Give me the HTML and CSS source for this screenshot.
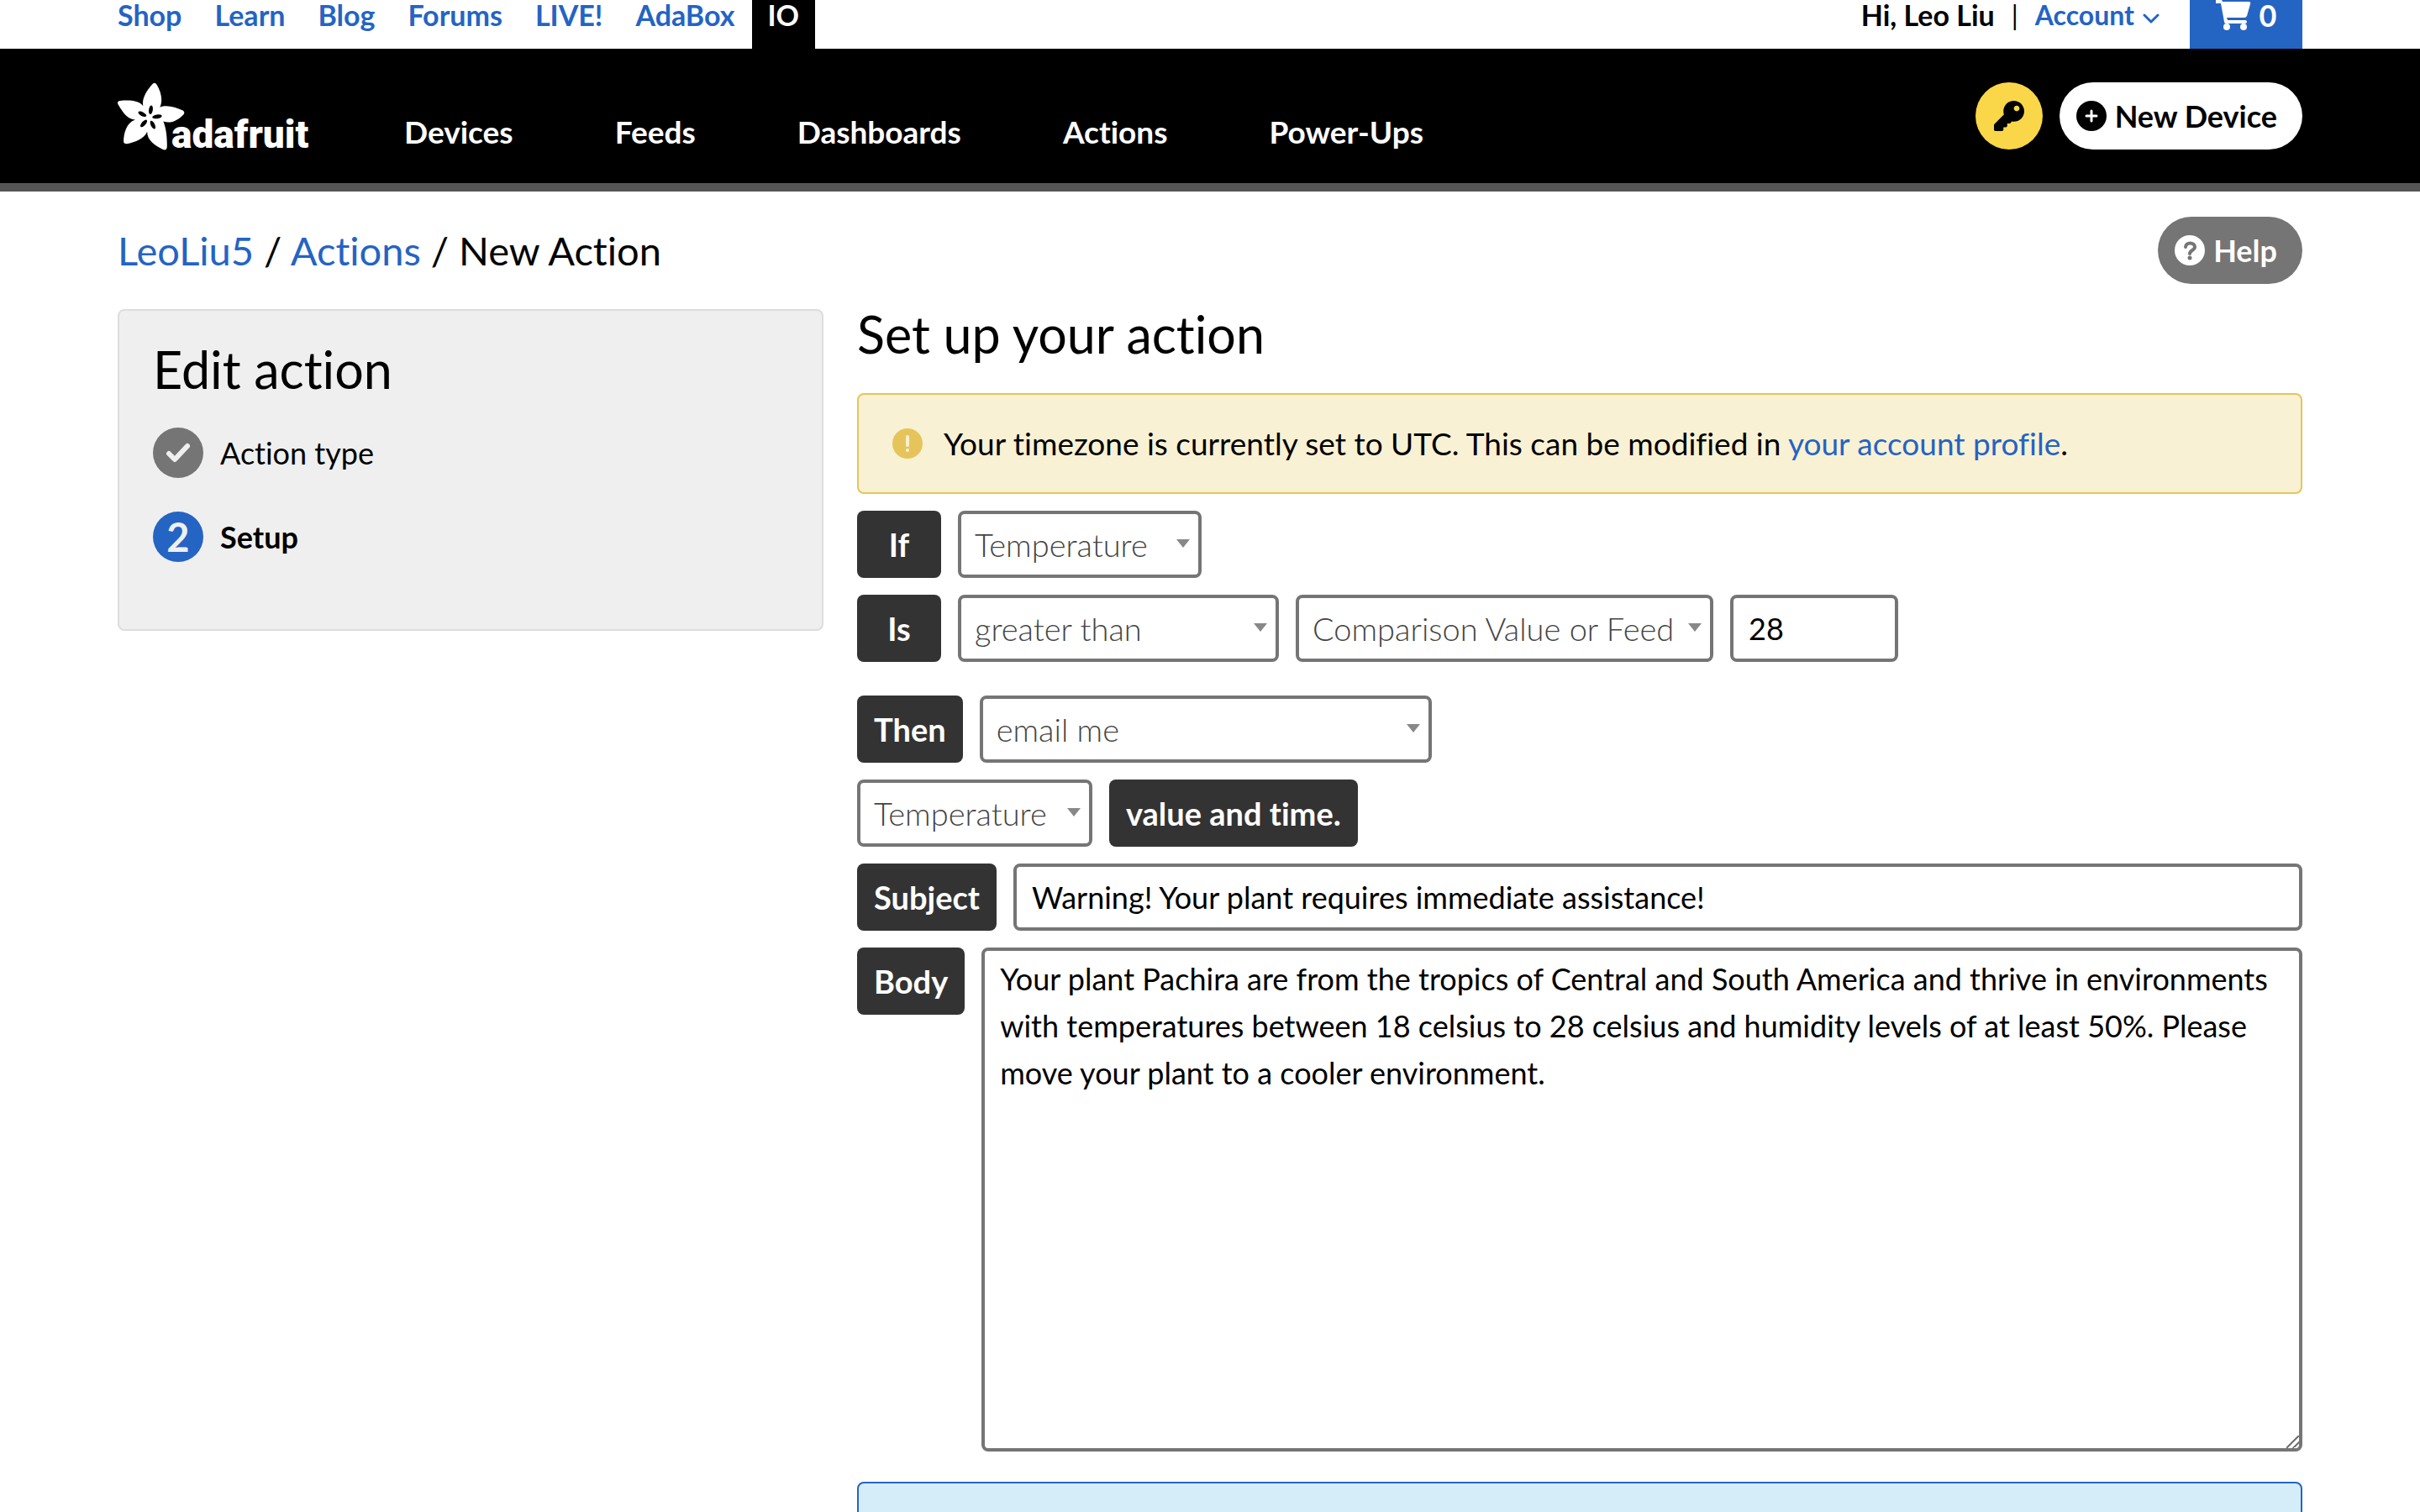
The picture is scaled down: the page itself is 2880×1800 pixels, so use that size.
FILE: index.html
```html
<!DOCTYPE html>
<html lang="en">
<head>
<meta charset="utf-8">
<title>New Action - Adafruit IO</title>
<meta name="viewport" content="width=device-width, initial-scale=1">
<link rel="stylesheet" href="styles.css">
</head>
<body>
<div class="topbar">
  <div class="container topbar-inner">
    <nav class="site-links" aria-label="Adafruit sites">
      <a href="#">Shop</a>
      <a href="#">Learn</a>
      <a href="#">Blog</a>
      <a href="#">Forums</a>
      <a href="#">LIVE!</a>
      <a href="#">AdaBox</a>
      <a href="#" class="current">IO</a>
    </nav>
    <div class="account">
      <span class="greeting">Hi, Leo Liu</span>
      <span class="divider">|</span>
      <a href="#" class="account-link">Account
        <svg class="chevron" viewBox="0 0 20 12" aria-hidden="true"><path d="M2 2l8 8 8-8" fill="none" stroke="currentColor" stroke-width="3" stroke-linecap="round" stroke-linejoin="round"/></svg>
      </a>
      <a href="#" class="cart" aria-label="Cart, 0 items">
        <svg class="cart-icon" viewBox="0 0 42 36" aria-hidden="true"><path d="M0 0H7L8 2H39Q42 2 41 5L37 19Q36 21 34 21H13L14 24H35Q37 24 37 26T35 28H12Q10 28 10 26L6 4H0Z" fill="currentColor"/><circle cx="13" cy="32" r="4" fill="currentColor"/><circle cx="33" cy="32" r="4" fill="currentColor"/></svg>
        <span>0</span>
      </a>
    </div>
  </div>
</div>

<header class="header">
  <div class="container header-inner">
    <a href="#" class="logo">
      <svg class="flower" viewBox="30 26 237 240" aria-hidden="true">
        <path fill="#fff" d="M151 34Q160 22 168 34C184 60 190 92 179 114C200 104 232 112 260 125Q269 131 262 140C244 158 220 174 191 164C202 190 205 225 204 256Q201 268 190 263C160 248 134 230 134 200C126 222 92 238 62 243Q50 243 51 233C52 205 60 170 92 158C66 156 52 138 31 103Q27 92 39 91C72 88 106 90 120 110C114 84 132 56 151 34Z"/>
        <g fill="#000">
          <ellipse cx="147" cy="123" rx="7" ry="16" transform="rotate(8 147 123)"/>
          <ellipse cx="117" cy="138" rx="16" ry="7" transform="rotate(28 117 138)"/>
          <ellipse cx="169" cy="147" rx="17" ry="7" transform="rotate(-8 169 147)"/>
          <ellipse cx="122" cy="171" rx="16" ry="7" transform="rotate(-48 122 171)"/>
          <ellipse cx="154" cy="176" rx="16" ry="7" transform="rotate(64 154 176)"/>
        </g>
      </svg>
      <span class="wordmark">adafruit</span>
    </a>
    <nav class="main-nav" aria-label="Main">
      <a href="#">Devices</a>
      <a href="#">Feeds</a>
      <a href="#">Dashboards</a>
      <a href="#">Actions</a>
      <a href="#">Power-Ups</a>
    </nav>
    <div class="header-actions">
      <button type="button" class="key-button" aria-label="Show key">
        <svg class="icon" viewBox="0 0 512 512" aria-hidden="true"><path fill="currentColor" d="M512 176.001C512 273.203 433.202 352 336 352c-11.22 0-22.19-1.062-32.827-3.069l-24.012 27.014A23.999 23.999 0 0 1 261.223 384H224v40c0 13.255-10.745 24-24 24h-40v40c0 13.255-10.745 24-24 24H24c-13.255 0-24-10.745-24-24v-78.059c0-6.365 2.529-12.47 7.029-16.971l161.802-161.802C163.108 213.814 160 195.271 160 176 160 78.798 238.797.001 335.999 0 433.488-.001 512 78.511 512 176.001zM336 128c0 26.51 21.49 48 48 48s48-21.49 48-48-21.49-48-48-48-48 21.49-48 48z"/></svg>
      </button>
      <button type="button" class="pill pill-light">
        <svg class="icon" viewBox="0 0 36 36" aria-hidden="true"><circle cx="18" cy="18" r="18" fill="currentColor"/><path d="M18 12v12M12 18h12" stroke="#fff" stroke-width="3" stroke-linecap="round"/></svg>
        <span>New Device</span>
      </button>
    </div>
  </div>
</header>

<main class="container">
  <div class="page-head">
    <nav class="breadcrumb" aria-label="Breadcrumb"><a href="#">LeoLiu5</a> / <a href="#">Actions</a> / New Action</nav>
    <button type="button" class="pill pill-gray">
      <svg class="icon" viewBox="0 0 36 36" aria-hidden="true"><circle cx="18" cy="18" r="18" fill="#fff"/><path d="M13 14c0-6 11-6 11 0 0 4-6 4-6 8" fill="none" stroke="#757575" stroke-width="4" stroke-linecap="round"/><circle cx="18" cy="27" r="2.5" fill="#757575"/></svg>
      <span>Help</span>
    </button>
  </div>

  <div class="columns">
    <aside class="panel">
      <h2 class="title">Edit action</h2>
      <ol class="steps">
        <li class="step">
          <span class="bullet"><svg class="check" viewBox="0 0 30 24" aria-hidden="true"><path d="M4 13l7 7L26 4" fill="none" stroke="currentColor" stroke-width="6" stroke-linecap="round" stroke-linejoin="round"/></svg></span>
          <span>Action type</span>
        </li>
        <li class="step active">
          <span class="bullet">2</span>
          <span>Setup</span>
        </li>
      </ol>
    </aside>

    <section class="content">
      <h2 class="title">Set up your action</h2>
      <div class="notice warning">
        <svg class="icon" viewBox="0 0 36 36" aria-hidden="true"><circle cx="18" cy="18" r="18" fill="#e5c55b"/><path d="M18 10v10" stroke="#f9f1d4" stroke-width="4" stroke-linecap="round"/><circle cx="18" cy="26" r="2" fill="#f9f1d4"/></svg>
        <p>Your timezone is currently set to UTC. This can be modified in <a href="#">your account profile</a>.</p>
      </div>

      <form class="rule">
        <div class="row">
          <label class="tag" for="feed">If</label>
          <div class="select w-feed"><select id="feed"><option>Temperature</option></select></div>
        </div>
        <div class="row row-last">
          <label class="tag" for="operator">Is</label>
          <div class="select w-operator"><select id="operator"><option>greater than</option></select></div>
          <div class="select w-source"><select aria-label="Comparison source"><option>Comparison Value or Feed</option></select></div>
          <input class="field w-value" type="text" value="28" aria-label="Comparison value">
        </div>
        <div class="row">
          <label class="tag" for="then">Then</label>
          <div class="select w-then"><select id="then"><option>email me</option></select></div>
        </div>
        <div class="row">
          <div class="select w-mail-feed"><select id="mail-feed"><option>Temperature</option></select></div>
          <label class="tag" for="mail-feed">value and time.</label>
        </div>
        <div class="row">
          <label class="tag" for="subject">Subject</label>
          <input class="field grow" id="subject" type="text" value="Warning! Your plant requires immediate assistance!">
        </div>
        <div class="row">
          <label class="tag" for="body">Body</label>
          <textarea class="field grow" id="body">Your plant Pachira are from the tropics of Central and South America and thrive in environments with temperatures between 18 celsius to 28 celsius and humidity levels of at least 50%. Please move your plant to a cooler environment.</textarea>
        </div>
      </form>

      <div class="notice info"></div>
    </section>
  </div>
</main>
</body>
</html>
```
FILE: styles.css
```css
:root {
  --blue: #2464c3;
  --gray: #757575;
  --dark: #333;
}

* {
  box-sizing: border-box;
}

body {
  margin: 0;
  height: 100vh;
  overflow: hidden;
  background: #fff;
  color: #000;
  font: 400 36px/48px Lato, "Open Sans", sans-serif;
  font-variant-ligatures: none;
}

a {
  color: var(--blue);
  text-decoration: none;
}

button,
input,
select,
textarea {
  font: inherit;
  font-variant-ligatures: none;
  color: inherit;
}

svg {
  display: block;
  flex: none;
}

.container {
  padding: 0 140px;
}

.icon {
  width: 36px;
  height: 36px;
}

/* Top bar */
.topbar-inner,
.site-links,
.account {
  display: flex;
}

.topbar-inner {
  justify-content: space-between;
  height: 58px;
  font-weight: 700;
  line-height: 36px;
}

.site-links {
  gap: 1px;
  margin-left: -19px;
  font-size: 34px;
}

.site-links a {
  padding: 0 19px;
}

.site-links .current {
  background: #000;
  color: #fff;
}

.greeting {
  font-size: 34px;
}

.divider {
  margin: 0 20px;
  font-size: 32px;
  font-weight: 400;
}

.account-link {
  display: flex;
  gap: 10px;
  margin-right: 36px;
  font-size: 32px;
}

.chevron {
  width: 20px;
  height: 12px;
  margin-top: 16px;
}

.cart {
  display: flex;
  justify-content: center;
  gap: 10px;
  width: 134px;
  background: var(--blue);
  color: #fff;
}

.cart-icon {
  width: 42px;
  height: 36px;
}

/* Header */
.header {
  background: #000;
  border-bottom: 10px solid #555;
}

.header-inner {
  display: flex;
  height: 160px;
  padding-top: 40px;
}

.logo {
  display: flex;
  width: 341px;
  color: #fff;
}

.flower {
  width: 80px;
  height: 81px;
}

.wordmark {
  margin: 38px 0 0 -16px;
  font: 900 46px/48px Roboto, sans-serif;
}

.main-nav {
  display: flex;
  flex: 1;
  gap: 121px;
  padding-top: 35px;
  font-size: 37px;
  font-weight: 700;
}

.main-nav a {
  color: #fff;
}

.header-actions {
  display: flex;
  gap: 20px;
}

.key-button,
.pill {
  display: flex;
  align-items: center;
  height: 80px;
  border: 0;
  border-radius: 40px;
}

.key-button {
  justify-content: center;
  width: 80px;
  padding: 0;
  background: #fad748;
  color: #000;
}

.pill {
  gap: 10px;
  padding: 0 30px 0 20px;
  font-weight: 700;
}

.pill-light {
  background: #fff;
}

.pill-gray {
  background: var(--gray);
  color: #fff;
}

/* Page heading */
.page-head {
  display: flex;
  justify-content: space-between;
  align-items: center;
  margin: 30px 0;
}

.breadcrumb {
  font-size: 47px;
}

.columns {
  display: grid;
  grid-template-columns: 840fr 1720fr;
  gap: 40px;
  align-items: start;
}

.title {
  margin: 0;
  font-size: 61px;
  font-weight: 400;
  line-height: 60px;
}

/* Step list */
.panel {
  padding: 40px 40px 80px;
  background: #efefef;
  border: 2px solid #ddd;
  border-radius: 8px;
}

.steps {
  display: grid;
  gap: 40px;
  margin: 39px 0 0;
  padding: 0;
  list-style: none;
}

.step {
  display: flex;
  align-items: center;
  gap: 20px;
  height: 60px;
}

.bullet {
  display: grid;
  place-items: center;
  width: 60px;
  height: 60px;
  border-radius: 50%;
  background: var(--gray);
  color: #efefef;
}

.check {
  width: 30px;
  height: 24px;
}

.step.active {
  font-weight: 700;
}

.step.active .bullet {
  background: var(--blue);
  font-size: 47px;
}

/* Notices */
.notice {
  display: flex;
  align-items: center;
  gap: 25px;
  min-height: 120px;
  padding: 0 40px;
  border: 2px solid;
  border-radius: 8px;
  font-size: 37px;
}

.notice p {
  margin: 0;
}

.warning {
  margin: 40px 0 20px;
  background: #f9f1d4;
  border-color: #e5c55b;
}

.info {
  margin-top: 36px;
  background: #d5edf9;
  border-color: var(--blue);
}

/* Rule form */
.rule {
  display: grid;
  gap: 20px;
}

.row {
  display: flex;
  align-items: flex-start;
  gap: 20px;
}

.row-last {
  margin-bottom: 20px;
}

.tag {
  min-width: 100px;
  padding: 0 20px;
  background: var(--dark);
  border-radius: 8px;
  color: #fff;
  font-size: 38px;
  font-weight: 700;
  line-height: 80px;
  text-align: center;
}

.field,
.select select {
  height: 80px;
  margin: 0;
  border: 4px solid var(--gray);
  border-radius: 8px;
  background: #fff;
}

.field {
  padding: 0 18px;
}

.grow {
  flex: 1;
  min-width: 0;
}

.select {
  position: relative;
}

.select select {
  width: 100%;
  padding: 0 16px;
  appearance: none;
  color: #444;
  font-size: 38px;
  font-weight: 300;
}

.select::after {
  content: "";
  position: absolute;
  top: 34px;
  right: 14px;
  border: 8px solid transparent;
  border-top: 10px solid #888;
  border-bottom: 0;
  pointer-events: none;
}

.w-feed { width: 290px; }
.w-operator { width: 382px; }
.w-source { width: 497px; }
.w-value { width: 200px; }
.w-then { width: 538px; }
.w-mail-feed { width: 280px; }

textarea.field {
  height: 600px;
  padding: 5px 18px;
  line-height: 56px;
  resize: both;
}

textarea.field::-webkit-resizer {
  background: linear-gradient(135deg, transparent 46%, var(--gray) 46% 54%, transparent 54% 72%, var(--gray) 72% 80%, transparent 80%);
}
```
